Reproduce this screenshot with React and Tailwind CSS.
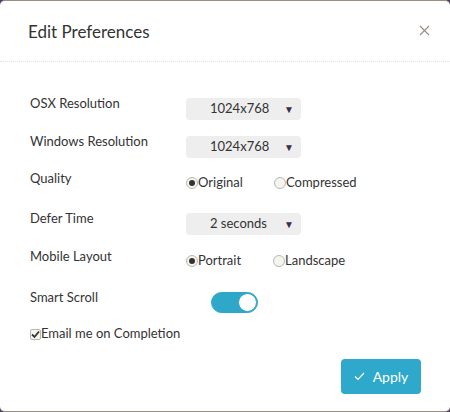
import React, { useState } from 'react';

function Select({ value }) {
  return (
    <div className="mt-[5px] flex h-[22px] w-[115px] items-center justify-between rounded-[4px] bg-[#eeeeee] pl-[24px] pr-[7px] text-[13px] text-[#333]">
      <span>{value}</span>
      <span className="text-[10px] text-[#3a3045]">▼</span>
    </div>
  );
}

function Radio({ checked, label, className = '' }) {
  return (
    <div className={`flex items-center text-[13px] text-[#333] ${className}`}>
      <span className="flex h-[12px] w-[12px] items-center justify-center rounded-full border border-[#b8b8b0] bg-[#f4f4f0]">
        {checked && <span className="h-[6px] w-[6px] rounded-full bg-[#333]" />}
      </span>
      <span>{label}</span>
    </div>
  );
}

export default function App() {
  const [smartScroll, setSmartScroll] = useState(true);

  return (
    <div className="h-[412px] w-[450px] bg-[#4b3b66]" style={{ fontFamily: 'Lato, "Open Sans", sans-serif' }}>
      <div className="flex h-[412px] w-[450px] flex-col rounded-[5px] border-y border-[#9a8d7e] bg-white">
        {/* header */}
        <div className="flex h-[61px] items-center justify-between border-b border-dotted border-[#e2e2e2] pl-[28px] pr-[20px]">
          <h2 className="pt-[1px] text-[17px] text-[#333]">Edit Preferences</h2>
          <svg width="11" height="11" viewBox="0 0 11 11" className="mt-[-1px]">
            <path d="M1 1 L10 10 M10 1 L1 10" stroke="#9a9088" strokeWidth="1.2" />
          </svg>
        </div>

        {/* body */}
        <div className="flex flex-col pl-[30px] pt-[31px] text-[13px] text-[#333]">
          <div className="flex h-[38px] items-start">
            <span className="w-[156px] leading-[20px]">OSX Resolution</span>
            <Select value="1024x768" />
          </div>
          <div className="flex h-[37px] items-start">
            <span className="w-[156px] leading-[20px]">Windows Resolution</span>
            <Select value="1024x768" />
          </div>
          <div className="flex h-[40px] items-start">
            <span className="w-[156px] leading-[20px]">Quality</span>
            <div className="mt-[5px] flex h-[20px] items-center">
              <Radio checked label="Original" className="w-[88px]" />
              <Radio label="Compressed" />
            </div>
          </div>
          <div className="flex h-[38px] items-start">
            <span className="w-[156px] leading-[20px]">Defer Time</span>
            <Select value="2 seconds" />
          </div>
          <div className="flex h-[41px] items-start">
            <span className="w-[156px] leading-[20px]">Mobile Layout</span>
            <div className="mt-[5px] flex h-[20px] items-center">
              <Radio checked label="Portrait" className="w-[87px]" />
              <Radio label="Landscape" />
            </div>
          </div>
          <div className="flex h-[37px] items-start">
            <span className="w-[181px] leading-[20px]">Smart Scroll</span>
            <button
              onClick={() => setSmartScroll(!smartScroll)}
              className={`mt-[5px] flex h-[21px] w-[47px] items-center rounded-full border border-[#2ea7c9] ${smartScroll ? 'justify-end bg-[#2ea7c9]' : 'justify-start bg-[#e5e5e5]'}`}
            >
              <span className="h-[19px] w-[19px] rounded-full border border-[#2ea7c9] bg-white" />
            </button>
          </div>
          <div className="flex h-[20px] items-center">
            <span className="flex h-[11px] w-[11px] items-center justify-center rounded-[2px] border border-[#b8b8b0] bg-[#f4f4f0]">
              <svg width="9" height="9" viewBox="0 0 9 9">
                <path d="M1 4.5 L3.5 7 L8 1.5" stroke="#333" strokeWidth="1.8" fill="none" />
              </svg>
            </span>
            <span>Email me on Completion</span>
          </div>
        </div>

        {/* footer */}
        <div className="flex justify-end pr-[29px] pt-[15px]">
          <button className="flex h-[35px] w-[80px] items-center justify-center gap-[8px] rounded-[4px] bg-[#2ea8cb] text-[14px] text-white">
            <svg width="11" height="9" viewBox="0 0 11 9">
              <path d="M1 4.5 L4 7.5 L10 1" stroke="white" strokeWidth="1.2" fill="none" />
            </svg>
            <span>Apply</span>
          </button>
        </div>
      </div>
    </div>
  );
}
